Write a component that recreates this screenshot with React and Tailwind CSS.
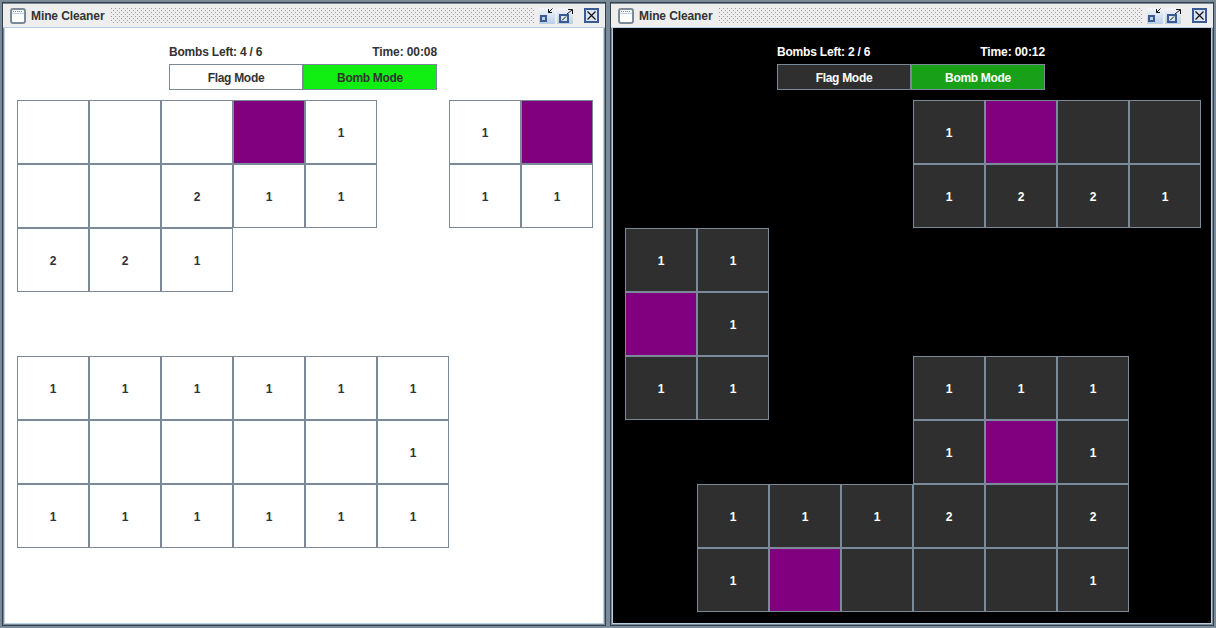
import React from "react";

// n = no cell, e = opened blank, p = purple (flagged), numbers = neighbours
const n = null;
const e = "";
const p = "p";

const lightBoard = [
  [e, e, e, p, 1, n, 1, p],
  [e, e, 2, 1, 1, n, 1, 1],
  [2, 2, 1, n, n, n, n, n],
  [n, n, n, n, n, n, n, n],
  [1, 1, 1, 1, 1, 1, n, n],
  [e, e, e, e, e, 1, n, n],
  [1, 1, 1, 1, 1, 1, n, n],
  [n, n, n, n, n, n, n, n],
];

const darkBoard = [
  [n, n, n, n, 1, p, e, e],
  [n, n, n, n, 1, 2, 2, 1],
  [1, 1, n, n, n, n, n, n],
  [p, 1, n, n, n, n, n, n],
  [1, 1, n, n, 1, 1, 1, n],
  [n, n, n, n, 1, p, 1, n],
  [n, 1, 1, 1, 2, e, 2, n],
  [n, 1, p, e, e, e, 1, n],
];

const WindowIcon = () => (
  <svg width="16" height="16" viewBox="0 0 16 16" className="shrink-0">
    <rect x="1" y="1" width="14" height="14" rx="2" fill="#fff" stroke="#7a8a99" strokeWidth="2" />
    <path d="M3 3.5h1M5 3.5h1M7 3.5h1M9 3.5h1M11 3.5h1" stroke="#7a8a99" strokeWidth="1" />
    <path d="M2 5.5h12" stroke="#b8cfe5" strokeWidth="1" />
  </svg>
);

const IconifyButton = () => (
  <svg width="16" height="16" viewBox="0 0 16 16" className="shrink-0">
    <defs>
      <linearGradient id="btnA" x1="0" y1="0" x2="0" y2="1">
        <stop offset="0" stopColor="#f4f7fb" />
        <stop offset="1" stopColor="#b8cfe5" />
      </linearGradient>
    </defs>
    <rect x="0" y="0" width="16" height="16" fill="url(#btnA)" />
    <path d="M13.5 0.5 L9.5 4.5 M9.5 1 V4.5 H13" stroke="#111" strokeWidth="1" fill="none" />
    <rect x="2" y="8" width="5" height="5" fill="#b8cfe5" stroke="#3a5a94" strokeWidth="2" />
  </svg>
);

const MaximizeButton = () => (
  <svg width="16" height="16" viewBox="0 0 16 16" className="shrink-0">
    <rect x="0" y="0" width="16" height="16" fill="url(#btnA)" />
    <rect x="3" y="7" width="8" height="7" fill="#dce6f2" stroke="#3a5a94" strokeWidth="2" />
    <path d="M5 12.5 L9 8.5" stroke="#111" strokeWidth="1" />
    <path d="M10 6 L15 2 M11 1.5 H15.5 V6" stroke="#111" strokeWidth="1" fill="none" />
  </svg>
);

const CloseButton = () => (
  <svg width="15" height="15" viewBox="0 0 15 15" className="shrink-0">
    <rect x="1" y="1" width="13" height="13" fill="#dce6f2" stroke="#3a5a94" strokeWidth="2" />
    <path d="M3.5 3.5 L11.5 11.5 M11.5 3.5 L3.5 11.5" stroke="#111" strokeWidth="1.2" />
  </svg>
);

const Cell = ({ value, dark }) => {
  if (value === null) return <div />;
  const bg =
    value === "p" ? "bg-[#800080]" : dark ? "bg-[#2f2f2f] text-white" : "bg-white text-[#333333]";
  return (
    <div className={`flex items-center justify-center border border-[#7a8a99] pt-[1px] text-xs font-bold ${bg}`}>
      {value === "p" ? "" : value}
    </div>
  );
};

const GameWindow = ({ dark, bombs, time, board }) => (
  <div className="flex h-[628px] w-[608px] shrink-0 flex-col bg-[#7a8a99] pt-[2px] pb-[2px]">
    <div className="mx-[2px] flex min-h-0 flex-1 flex-col border border-[#333f4a] pt-[1px]">
      <div className="flex h-[24px] shrink-0 items-center border-b border-[#b8cfe5] bg-[#eeeeee] pl-[7px] pr-[6px]">
        <WindowIcon />
        <span className="ml-[5px] pt-[1px] text-xs font-bold tracking-[-0.1px] text-[#333333]">Mine Cleaner</span>
        <div className="ml-[6px] h-[16px] flex-1 bg-[image:radial-gradient(circle_at_0.5px_0.5px,#9a9a9a_0.7px,transparent_0.8px),radial-gradient(circle_at_0.5px_0.5px,#9a9a9a_0.7px,transparent_0.8px)] bg-[size:4px_4px] bg-[position:0_0,2px_2px]" />
        <div className="ml-[4px] flex items-center gap-[2px]">
          <IconifyButton />
          <MaximizeButton />
          <div className="ml-[9px]">
            <CloseButton />
          </div>
        </div>
      </div>
      <div className={`mx-[1px] mb-[1px] flex min-h-0 flex-1 flex-col border-x border-b border-[#b8cfe5] ${dark ? "bg-black" : "bg-white"}`}>
        <div className={`ml-[164px] mt-[16px] flex h-[16px] w-[268px] items-center justify-between text-xs font-bold ${dark ? "text-white" : "text-[#333333]"}`}>
          <span className="tracking-[-0.2px]">Bombs Left: {bombs} / 6</span>
          <span className="tracking-[-0.1px]">Time: {time}</span>
        </div>
        <div className="ml-[164px] mt-[4px] flex h-[26px] w-[268px] text-xs font-bold tracking-[-0.3px]">
          <div className={`flex flex-1 items-center justify-center border border-[#7a8a99] pt-[1px] ${dark ? "bg-[#2f2f2f] text-white" : "bg-white text-[#333333]"}`}>
            Flag Mode
          </div>
          <div className={`flex flex-1 items-center justify-center border border-[#7a8a99] pt-[1px] ${dark ? "bg-[#18a018] text-white" : "bg-[#11ee11] text-[#333333]"}`}>
            Bomb Mode
          </div>
        </div>
        <div className="ml-[12px] mt-[10px] grid grid-cols-[repeat(8,72px)] grid-rows-[repeat(8,64px)]">
          {board.flat().map((value, i) => (
            <Cell key={i} value={value} dark={dark} />
          ))}
        </div>
      </div>
    </div>
  </div>
);

export default function App() {
  return (
    <div className="flex h-[628px] w-[1216px] overflow-hidden bg-[#7a8a99] font-['Liberation_Sans',sans-serif]">
      <GameWindow bombs={4} time="00:08" board={lightBoard} />
      <GameWindow dark bombs={2} time="00:12" board={darkBoard} />
    </div>
  );
}
